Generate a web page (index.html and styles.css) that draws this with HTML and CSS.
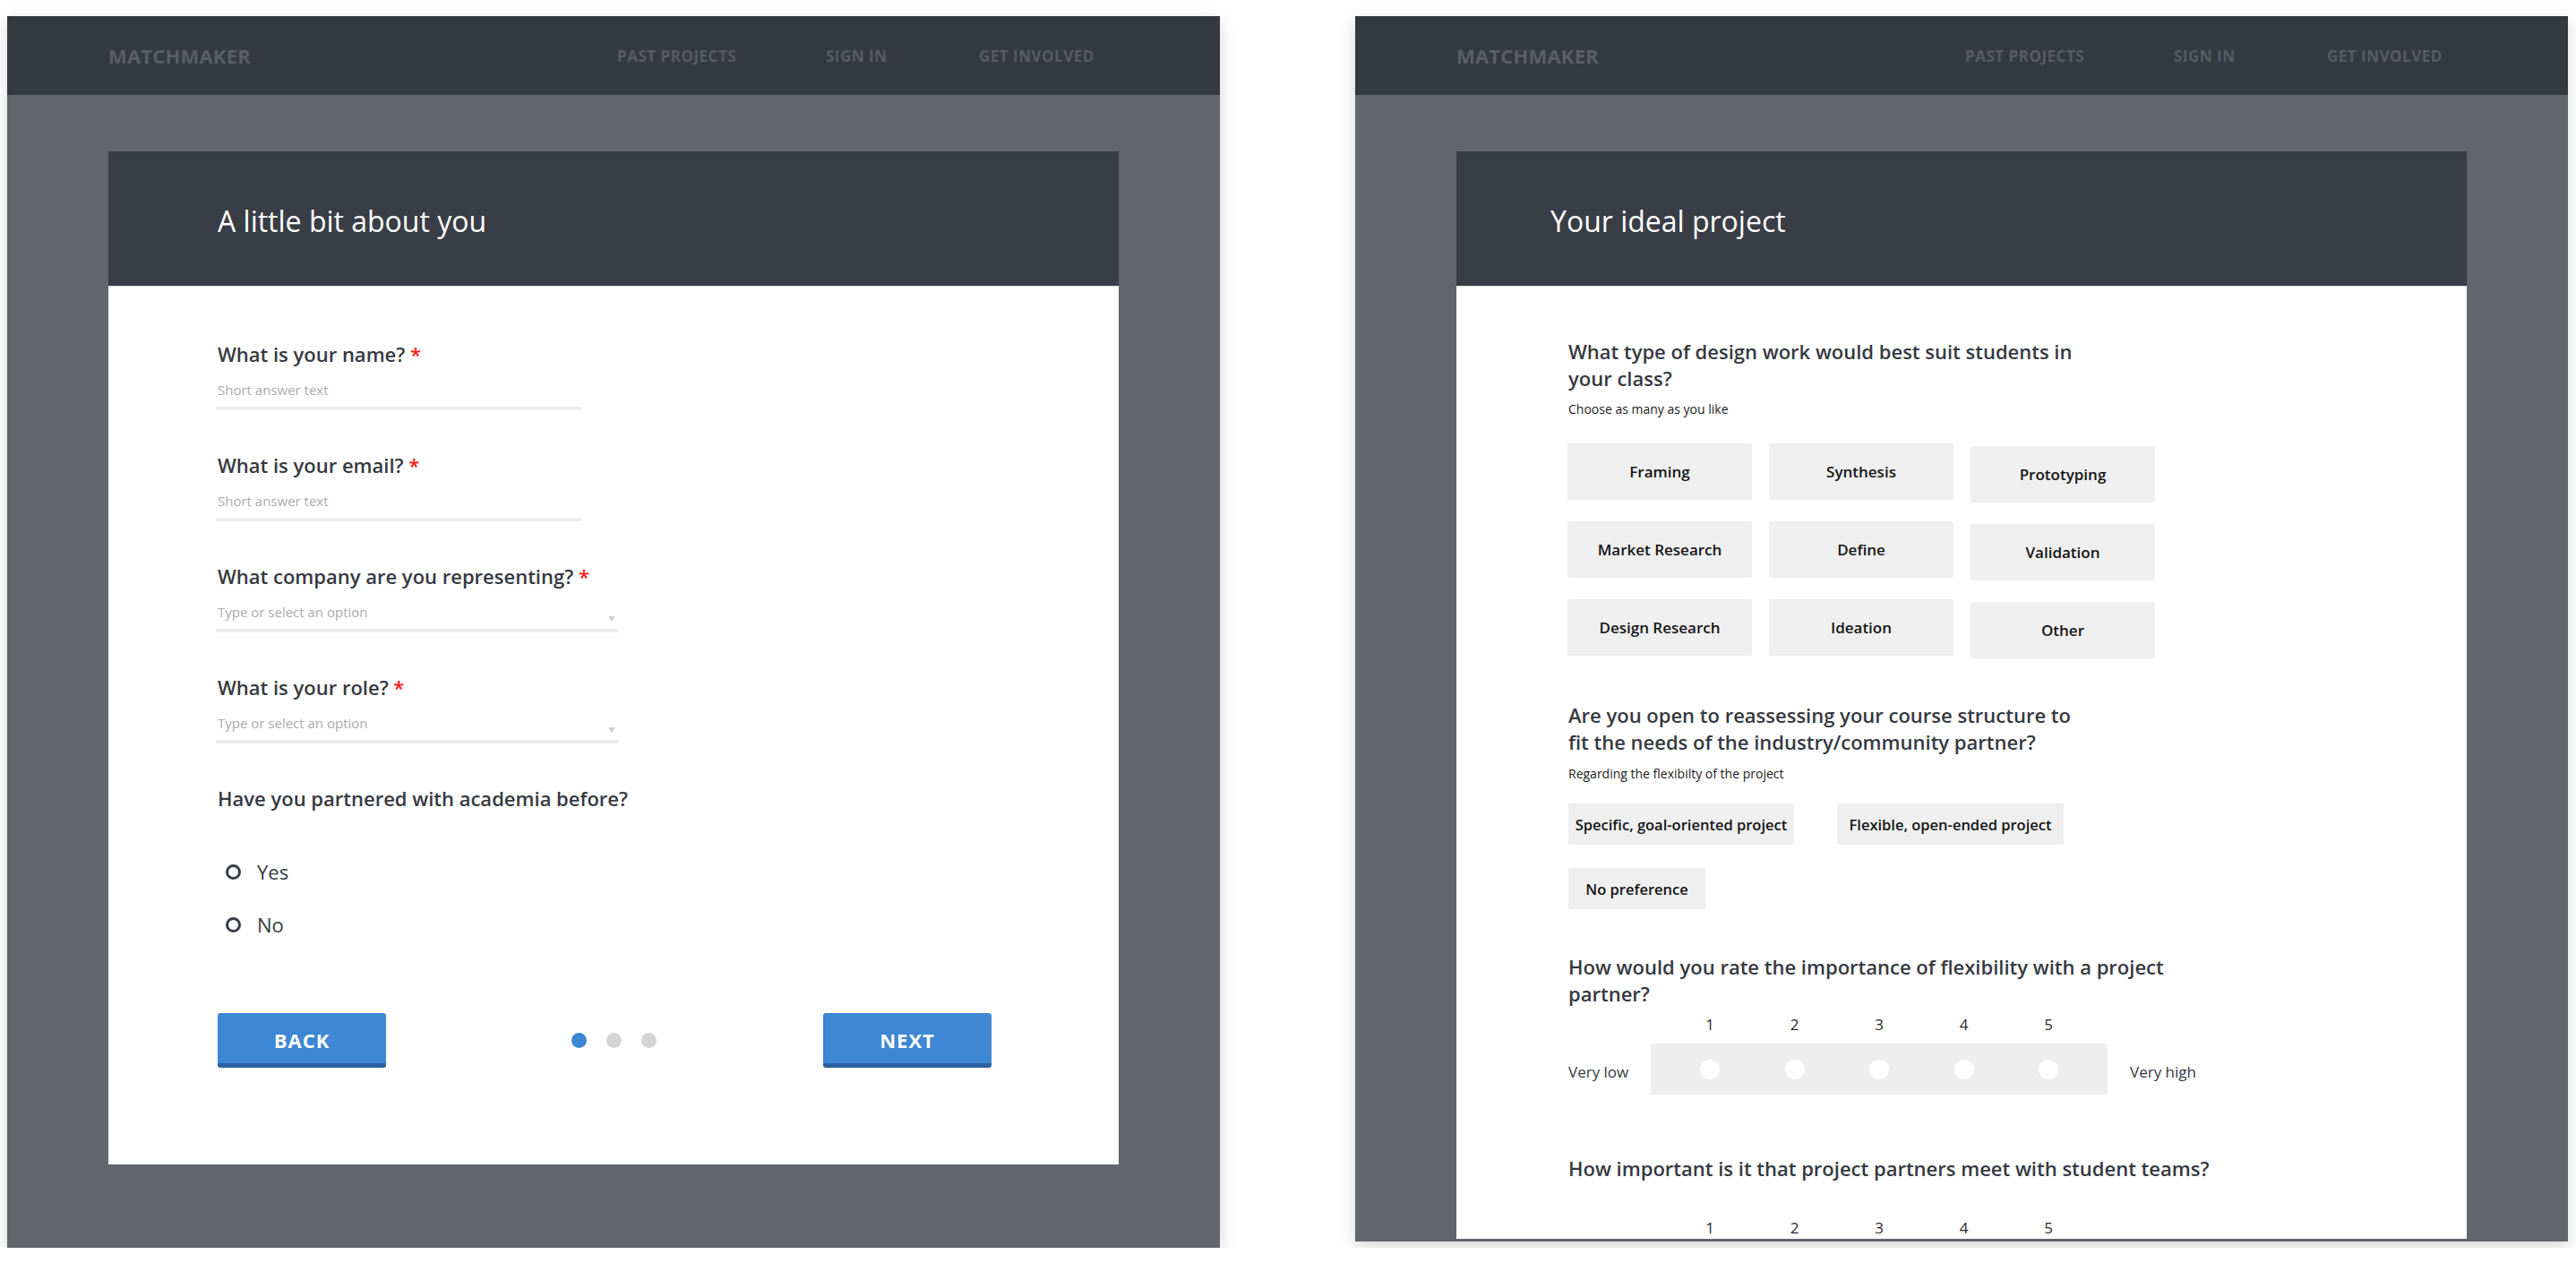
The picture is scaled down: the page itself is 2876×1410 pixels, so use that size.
FILE: index.html
```html
<!DOCTYPE html>
<html lang="en">
<head>
<meta charset="utf-8">
<title>Matchmaker</title>
<link rel="stylesheet" href="styles.css">
</head>
<body>
<div class="canvas">
  <section class="frame frame-left">
    <header class="nav">
      <div class="brand">MATCHMAKER</div>
      <nav class="links">
        <span class="link link-past">PAST PROJECTS</span>
        <span class="link link-sign">SIGN IN</span>
        <span class="link">GET INVOLVED</span>
      </nav>
    </header>
    <div class="stage">
      <div class="card">
        <div class="card-head card-head-left"><h1 class="title">A little bit about you</h1></div>
        <div class="card-body card-body-left">
          <div class="field">
            <div class="q">What is your name? <span class="req">*</span></div>
            <div class="input">Short answer text</div>
          </div>
          <div class="field">
            <div class="q">What is your email? <span class="req">*</span></div>
            <div class="input">Short answer text</div>
          </div>
          <div class="field">
            <div class="q">What company are you representing? <span class="req">*</span></div>
            <div class="input select">Type or select an option<span class="caret"></span></div>
          </div>
          <div class="field">
            <div class="q">What is your role? <span class="req">*</span></div>
            <div class="input select">Type or select an option<span class="caret"></span></div>
          </div>
          <div class="q">Have you partnered with academia before?</div>
          <div class="radios">
            <label class="radio"><span class="circle"></span>Yes</label>
            <label class="radio"><span class="circle"></span>No</label>
          </div>
          <div class="footer">
            <button class="btn">BACK</button>
            <div class="dots"><span class="dot on"></span><span class="dot"></span><span class="dot"></span></div>
            <button class="btn">NEXT</button>
          </div>
        </div>
      </div>
    </div>
  </section>

  <section class="frame frame-right">
    <header class="nav">
      <div class="brand">MATCHMAKER</div>
      <nav class="links">
        <span class="link link-past">PAST PROJECTS</span>
        <span class="link link-sign">SIGN IN</span>
        <span class="link">GET INVOLVED</span>
      </nav>
    </header>
    <div class="stage">
      <div class="card">
        <div class="card-head card-head-right"><h1 class="title">Your ideal project</h1></div>
        <div class="card-body card-body-right">
          <div class="q">What type of design work would best suit students in<br>your class?</div>
          <div class="sub">Choose as many as you like</div>
          <div class="chip-grid">
            <div class="chip">Framing</div>
            <div class="chip">Synthesis</div>
            <div class="chip chip-low">Prototyping</div>
            <div class="chip">Market Research</div>
            <div class="chip">Define</div>
            <div class="chip chip-low">Validation</div>
            <div class="chip">Design Research</div>
            <div class="chip">Ideation</div>
            <div class="chip chip-low">Other</div>
          </div>

          <div class="q q2">Are you open to reassessing your course structure to<br>fit the needs of the industry/community partner?</div>
          <div class="sub sub2">Regarding the flexibilty of the project</div>
          <div class="prefs">
            <div class="pref pref-a">Specific, goal-oriented project</div>
            <div class="pref pref-b">Flexible, open-ended project</div>
            <div class="pref pref-c">No preference</div>
          </div>

          <div class="q q3">How would you rate the importance of flexibility with a project<br>partner?</div>
          <div class="nums"><span>1</span><span>2</span><span>3</span><span>4</span><span>5</span></div>
          <div class="scale">
            <span class="scale-label">Very low</span>
            <div class="track"><span class="knob"></span><span class="knob"></span><span class="knob"></span><span class="knob"></span><span class="knob"></span></div>
            <span class="scale-label scale-high">Very high</span>
          </div>

          <div class="q q4">How important is it that project partners meet with student teams?</div>
          <div class="nums nums4"><span>1</span><span>2</span><span>3</span><span>4</span><span>5</span></div>
        </div>
      </div>
    </div>
  </section>
</div>
</body>
</html>
```

FILE: styles.css
```css
* { box-sizing: border-box; }

html, body {
  margin: 0;
  padding: 0;
  background: #ffffff;
}

body {
  font-family: "Open Sans", "Noto Sans", sans-serif;
  color: #363941;
}

.canvas {
  display: flex;
  align-items: flex-start;
  gap: 151px;
  padding: 18px 0 0 8px;
}

.frame {
  width: 1354px;
  flex: none;
  background: #62656d;
  overflow: hidden;
  box-shadow: 0 6px 18px rgba(0, 0, 0, 0.16);
}

.frame-left { height: 1375px; }
.frame-right { height: 1368px; }

/* nav */
.nav {
  height: 88px;
  background: #353a42;
  display: flex;
  align-items: center;
  padding-left: 113px;
}

.brand {
  width: 568px;
  flex: none;
  font-size: 22px;
  font-weight: 700;
  color: #5a5e67;
  letter-spacing: 0.2px;
}

.links {
  display: flex;
  align-items: center;
}

.link {
  font-size: 17px;
  font-weight: 700;
  color: #575b64;
  letter-spacing: 0.5px;
  white-space: nowrap;
}

.link-past { width: 233px; }
.link-sign { width: 171px; }

/* stage & card */
.stage {
  padding: 63px 0 0 113px;
}

.card {
  width: 1128px;
  background: #ffffff;
}

.card-head {
  height: 151px;
  background: #393d46;
  border-bottom: 1px solid #d9dadc;
  display: flex;
  align-items: center;
  padding-top: 6px;
}

.card-head-left { padding-left: 122px; }
.card-head-right { padding-left: 105px; }

.title {
  margin: 0;
  font-size: 32px;
  font-weight: 400;
  line-height: 44px;
  color: #ffffff;
}

.card-body-left {
  padding: 60px 0 108px 122px;
}

.card-body-right {
  padding: 57px 0 0 125px;
}

/* questions */
.q {
  font-size: 22px;
  line-height: 30px;
  font-weight: 600;
  color: #363941;
  white-space: nowrap;
}

.req { color: #ff1a1a; }

.field { margin-bottom: 46px; }

.input {
  position: relative;
  width: 408px;
  margin-top: 15px;
  margin-left: -2px;
  padding: 0 0 9px 2px;
  border-bottom: 4px solid #eeeeee;
  font-size: 15px;
  line-height: 20px;
  color: #ababab;
}

.input.select { width: 450px; }

.caret {
  position: absolute;
  right: 4px;
  top: 15px;
  width: 0;
  height: 0;
  border-left: 4px solid transparent;
  border-right: 4px solid transparent;
  border-top: 6px solid #cfcfcf;
}

/* radios */
.radios {
  margin-top: 52px;
  display: flex;
  flex-direction: column;
  gap: 29px;
}

.radio {
  display: flex;
  align-items: center;
  height: 30px;
  font-size: 22px;
  color: #363941;
  padding-left: 9px;
  gap: 18px;
}

.circle {
  width: 17px;
  height: 17px;
  border: 3px solid #3a3d45;
  border-radius: 50%;
}

/* footer */
.footer {
  margin-top: 84px;
  width: 864px;
  display: flex;
  align-items: center;
  justify-content: space-between;
}

.btn {
  width: 188px;
  height: 61px;
  border: 0;
  border-bottom: 5px solid #2c60a0;
  border-radius: 3px;
  background: #3d87d4;
  color: #ffffff;
  font-family: inherit;
  font-size: 22px;
  font-weight: 700;
  letter-spacing: 1px;
  padding: 4px 0 0;
}

.dots {
  display: flex;
  gap: 22px;
  margin-left: 20px;
}

.dot {
  width: 17px;
  height: 17px;
  border-radius: 50%;
  background: #d4d4d4;
}

.dot.on { background: #3d87d4; }

/* right card */
.sub {
  margin-top: 10px;
  font-size: 14px;
  line-height: 20px;
  color: #1c1c1c;
}

.chip-grid {
  margin-top: 28px;
  display: grid;
  grid-template-columns: repeat(3, 206px);
  column-gap: 19px;
  row-gap: 24px;
  margin-left: -1px;
}

.chip {
  height: 63px;
  background: #efefef;
  border-radius: 2px;
  display: flex;
  align-items: center;
  justify-content: center;
  font-size: 17px;
  font-weight: 600;
  color: #151515;
}

.chip-low { transform: translateY(3px); }

.q2 { margin-top: 51px; }

.sub2 { margin-top: 11px; }

.prefs {
  margin-top: 23px;
  width: 560px;
  display: flex;
  flex-wrap: wrap;
  column-gap: 48px;
  row-gap: 26px;
}

.pref {
  height: 46px;
  background: #efefef;
  border-radius: 2px;
  display: flex;
  align-items: center;
  justify-content: center;
  font-size: 16.5px;
  font-weight: 600;
  color: #151515;
  white-space: nowrap;
}

.pref-a { width: 252px; }
.pref-b { width: 253px; }
.pref-c { width: 153px; }

.q3 { margin-top: 49px; }

.nums {
  margin-top: 8px;
  margin-left: 92px;
  width: 510px;
  padding: 0 55px;
  display: flex;
  justify-content: space-between;
  font-size: 17px;
  line-height: 24px;
  color: #2b2b2b;
}

.nums span {
  width: 22px;
  text-align: center;
}

.scale {
  margin-top: 9px;
  display: flex;
  align-items: center;
}

.scale-label {
  width: 92px;
  flex: none;
  font-size: 17px;
  color: #363941;
  padding-top: 6px;
}

.scale-high {
  width: auto;
  margin-left: 25px;
}

.track {
  width: 510px;
  height: 57px;
  background: #eeeeee;
  border-radius: 2px;
  padding: 0 55px;
  display: flex;
  align-items: center;
  justify-content: space-between;
}

.knob {
  width: 22px;
  height: 22px;
  border-radius: 50%;
  background: #ffffff;
}

.q4 { margin-top: 67px; }

.nums4 { margin-top: 40px; }
```
